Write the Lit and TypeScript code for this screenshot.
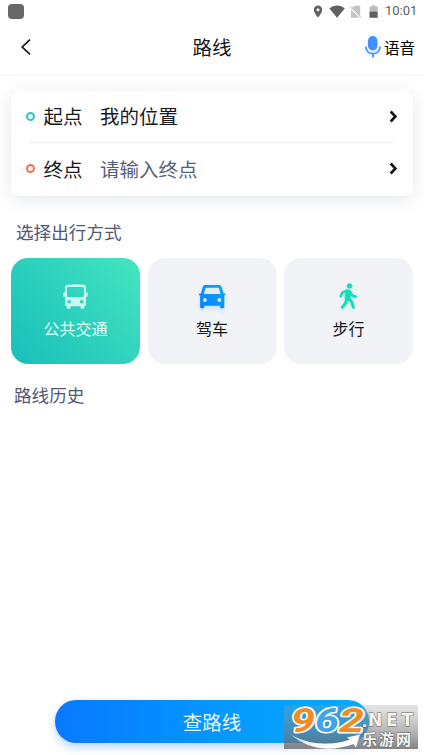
import { LitElement, html, css, svg } from "lit";
import { customElement, property } from "lit/decorators.js";

const statusIcons = svg`
  <path fill="#616161" fill-rule="evenodd" d="M5 .5A4.2 4.2 0 0 0 .8 4.700C.8 7.800 5 12.500 5 12.500S9.200 7.800 9.200 4.700A4.200 4.200 0 0 0 5 .5zM5 3.200a1.500 1.500 0 1 1 0 3 1.500 1.500 0 0 1 0-3z"/>
  <path fill="#616161" d="M16.400 3.500C20.500-.4 27.800-.4 31.800 3.500L24.100 12.800z"/>
  <path fill="#c4c4c4" d="M41.500.8h5.700v10.200L38.700 2.800zM38 4.700l8.500 8.100H38z"/>
  <path stroke="#b4b4b4" stroke-width="1" d="M37 1.500 48.300 12.800"/>
  <path fill="#bdbdbd" d="M58.700.2h3.400v1.400h2.600v5H56.500v-5h2.200z"/>
  <path fill="#616161" d="M56.500 6.500h8.200v6.300h-8.200z"/>`;

const glyphs = {
  bus: svg`<path fill="#c9f7ec" fill-rule="evenodd" d="M4 .7Q12.500-.4 21 .7Q23 1 23 3V8.500h1.200q.5 0 .5.500v3q0 .7-.7.700H23V20.500q0 1.700-1.700 1.800V23.500q0 1.200-1.200 1.200h-1.400q-1.200 0-1.200-1.200v-1.200H7.500v1.200q0 1.200-1.200 1.200H4.900q-1.200 0-1.200-1.200v-1.200Q2 22.200 2 20.500V12.700H1q-.7 0-.7-.7V9q0-.5.500-.5H2V3Q2 1 4 .7zM5 3q-.9 0-.9.900v8.200q0 .9.900.9h15q.9 0 .9-.9V3.900q0-.9-.9-.9zM6.300 15.900a1.800 1.800 0 1 0 0 3.600 1.800 1.800 0 0 0 0-3.600zm12.400 0a1.800 1.800 0 1 0 0 3.600 1.800 1.800 0 0 0 0-3.600z"/>`,
  car: svg`<defs><linearGradient id="g" x1="0" y1="1" x2="1" y2="0"><stop stop-color="#087fff"/><stop offset="1" stop-color="#08a9ff"/></linearGradient></defs>
    <path fill="url(#g)" fill-rule="evenodd" d="M6 0h14.400q1.600 0 2.100 1.500L24.600 8.600h1.300q.6 0 .6.600v.8q0 .6-.6.600h-.9l.3 1.500V22q0 1.200-1.200 1.200h-1.800q-1.200 0-1.200-1.200v-1.200H5.300v1.200q0 1.200-1.200 1.200H2.300Q1.100 23.200 1.100 22V12l.3-1.400H.6Q0 10.600 0 10v-.8q0-.6.600-.6h1.300l2-7.100Q4.400 0 6 0zM7.300 2.800q-.8 0-1 .8L4.900 8.900h16.600l-1.400-5.300q-.2-.8-1-.8zM5.900 13.100a2 2 0 1 0 0 4 2 2 0 0 0 0-4zm14.500 0a2 2 0 1 0 0 4 2 2 0 0 0 0-4z"/>`,
  walk: svg`<g fill="#11ddb7" stroke="#11ddb7" stroke-linejoin="round" stroke-linecap="round"><circle cx="10.500" cy="3" r="2.500" stroke-width=".4"/>
    <path d="M7 7.300Q9.500 6 11.500 8.200L11 16l-4.500-.3z"/>
    <g fill="none" stroke-width="2.500"><path d="M7.500 7.800 3.300 9.600 1.800 13.300M11 8.500l2.300 4 3.400 1.200"/><path stroke-width="3" d="M7.700 15.500 6.700 20 3.300 24.400M9.300 15.300l3.400 3.700 1.700 5.400"/></g></g>`,
};

@customElement("mode-tile")
class ModeTile extends LitElement {
  @property() label = "";
  @property() kind: keyof typeof glyphs = "bus";

  static styles = css`
    :host { display: flex; flex-direction: column; align-items: center; box-sizing: border-box; height: 106px; padding-top: 26px; border-radius: 17px; background: #f2f3f7; color: #17181c; }
    :host([active]) { background: linear-gradient(50deg, #19bfb9, #30d3bd 55%, #44e6c0); color: #e3fff8; }
    svg { display: block; overflow: visible; height: 26px; }
    .car { margin-top: 1px; height: 25px; filter: drop-shadow(0 3px 2px #1199ff30); }
    .walk { margin: -1px 1px 0 0; height: 27px; filter: drop-shadow(0 2px 2px #11ddb730); }
    span { margin-top: 6px; font-size: 16px; line-height: 24px; }
  `;

  render() {
    const width = { bus: 25, car: 27, walk: 18 }[this.kind];
    const height = { bus: 26, car: 25, walk: 27 }[this.kind];
    return html`<svg class=${this.kind} width=${width} viewBox="0 0 ${width} ${height}">${glyphs[this.kind]}</svg><span>${this.label}</span>`;
  }
}

@customElement("place-row")
class PlaceRow extends LitElement {
  @property() label = "";
  @property() value = "";

  static styles = css`
    :host { display: flex; align-items: center; height: 49px; padding: 0 15px; font-size: 19.500px; line-height: 30px; color: #17181c; }
    :host([end]) { height: 51px; }
    .dot { box-sizing: border-box; width: 9px; height: 9px; border: 2.500px solid #39bfca; border-radius: 50%; background: #e8fbfb; }
    :host([end]) .dot { border-color: #ed735f; background: #fff0ec; }
    .label { margin-left: 8.500px; }
    .value { margin-left: 17.500px; flex: 1; }
    :host([end]) .value { color: #575f7e; }
  `;

  render() {
    return html`<i class="dot"></i><span class="label">${this.label}</span><span class="value">${this.value}</span>
      <svg width="9" height="13" viewBox="0 0 9 13" fill="none" stroke="#111216" stroke-width="2.600"><path d="m1.700 1.500 4.700 5-4.700 5"/></svg>`;
  }
}

@customElement("app-root")
class AppRoot extends LitElement {
  static styles = css`
    :host { display: flex; flex-direction: column; position: relative; box-sizing: border-box; height: 755px; width: 424px; overflow: hidden; background: #fff; font-family: "Noto Sans CJK SC", sans-serif; color: #17181c; }
    .status { display: flex; align-items: center; height: 22px; padding: 0 7px 0 8px; }
    .app { width: 16px; height: 15px; border-radius: 4px; background: #686868; margin-right: auto; }
    .time { margin-left: 6px; width: 32px; font: 400 13px/22px Roboto, sans-serif; color: #5c5c5c; white-space: nowrap; }
    .bar { display: grid; grid-template-columns: 1fr auto 1fr; align-items: center; height: 54px; box-sizing: border-box; padding: 0 9px 2px 20px; border-bottom: 2px solid #f7f9fb; }
    .bar h1 { margin: 0 0 0 -11px; font-size: 19.500px; line-height: 28px; font-weight: 400; }
    .voice { display: flex; align-items: center; justify-content: flex-end; gap: 3px; font-size: 15.500px; line-height: 24px; color: #000; }
    .voice svg { overflow: visible; filter: drop-shadow(0 2px 2px #3f8cff30); }
    .card { box-sizing: border-box; height: 105px; margin: 15px 11px 0; padding-top: .500px; border-radius: 9px; background: #fff; box-shadow: 0 3px 18px #2c436a20; }
    .rule { height: 1px; margin: 1.500px 20px 0 19px; background: #e9eaec; }
    h2 { margin: 0; font-size: 17.600px; line-height: 26px; font-weight: 400; color: #515874; }
    .choose { margin: 23px 16px 0; }
    .history { margin: 18px 14px 0; }
    .tiles { display: grid; grid-template-columns: repeat(3, 1fr); gap: 7.500px; margin: 13px 11px 0; }
    .search { margin: auto 55px 12.500px; height: 42.500px; border: 0; border-radius: 21px; color: #e8f7ff; font: 400 19.500px/42px "Noto Sans CJK SC", sans-serif; background: linear-gradient(90deg, #0879ff, #059eff 65%, #06aaff); box-shadow: 0 4px 8px #1678ff50; padding: 1px 0 0; }
    .mark { position: absolute; left: 284px; top: 705px; width: 134px; height: 44px; overflow: visible; }
  `;

  render() {
    return html`
      <div class="status"><i class="app"></i><svg width="66" height="13" viewBox="0 0 66 13">${statusIcons}</svg><span class="time">10:01</span></div>
      <header class="bar">
        <svg width="12" height="18" viewBox="0 0 12 18" fill="none" stroke="#17181f" stroke-width="1.700"><path d="M10 1.700 2.200 9l7.800 7.300"/></svg>
        <h1>路线</h1>
        <div class="voice"><svg width="16" height="22" viewBox="0 0 16 22"><rect x="3" width="9.500" height="14.500" rx="4.750" fill="#438fff"/><path d="M.8 10.500c.5 9.500 13.900 9.500 14.400 0M8 17.500v4" fill="none" stroke="#438fff" stroke-width="1.700"/></svg>语音</div>
      </header>
      <section class="card">
        <place-row label="起点" value="我的位置"></place-row>
        <div class="rule"></div>
        <place-row end label="终点" value="请输入终点"></place-row>
      </section>
      <h2 class="choose">选择出行方式</h2>
      <div class="tiles">
        <mode-tile active kind="bus" label="公共交通"></mode-tile>
        <mode-tile kind="car" label="驾车"></mode-tile>
        <mode-tile kind="walk" label="步行"></mode-tile>
      </div>
      <h2 class="history">路线历史</h2>
      <button class="search">查路线</button>
      <svg class="mark" viewBox="0 0 134 44">
        <defs>
          <linearGradient id="shade" x2="0" y2="1"><stop stop-color="#999" stop-opacity=".25"/><stop offset=".5" stop-color="#808080" stop-opacity=".5"/><stop offset="1" stop-color="#666" stop-opacity=".8"/></linearGradient>
          <linearGradient id="swoosh"><stop stop-color="#fff" stop-opacity=".7"/><stop offset=".4" stop-color="#fff"/></linearGradient>
        </defs>
        <rect width="134" height="44" fill="url(#shade)"/>
        <g font-family="Roboto" font-weight="700" font-style="italic" font-size="33.500" stroke="#fff" stroke-width="3" stroke-linejoin="round" paint-order="stroke">
          <text x="7" y="27" textLength="24" lengthAdjust="spacingAndGlyphs" fill="#f18c22">9</text>
          <text x="31" y="27" textLength="24" lengthAdjust="spacingAndGlyphs" fill="#42a4e5">6</text>
          <text x="55" y="27" textLength="25" lengthAdjust="spacingAndGlyphs" fill="#f18c22">2</text>
        </g>
        <path fill="url(#swoosh)" d="M7 30Q36 45 66 34.500l-3-2 13-3-4 13-2.500-3.500Q34 52 7 30z"/>
        <g fill="#f5f5f5" stroke="#666" stroke-width="1" paint-order="stroke" font-weight="700">
          <text x="78" y="21.500" font-family="Liberation Sans" font-size="18">.</text>
          <g font-family="DejaVu Sans" font-size="17">
            <text x="84" y="21">N</text><text x="102" y="21">E</text><text x="117.500" y="21">T</text>
          </g>
          <text x="78" y="40" font-family="Noto Sans CJK SC" font-size="15" textLength="49">乐游网</text>
        </g>
      </svg>`;
  }
}
